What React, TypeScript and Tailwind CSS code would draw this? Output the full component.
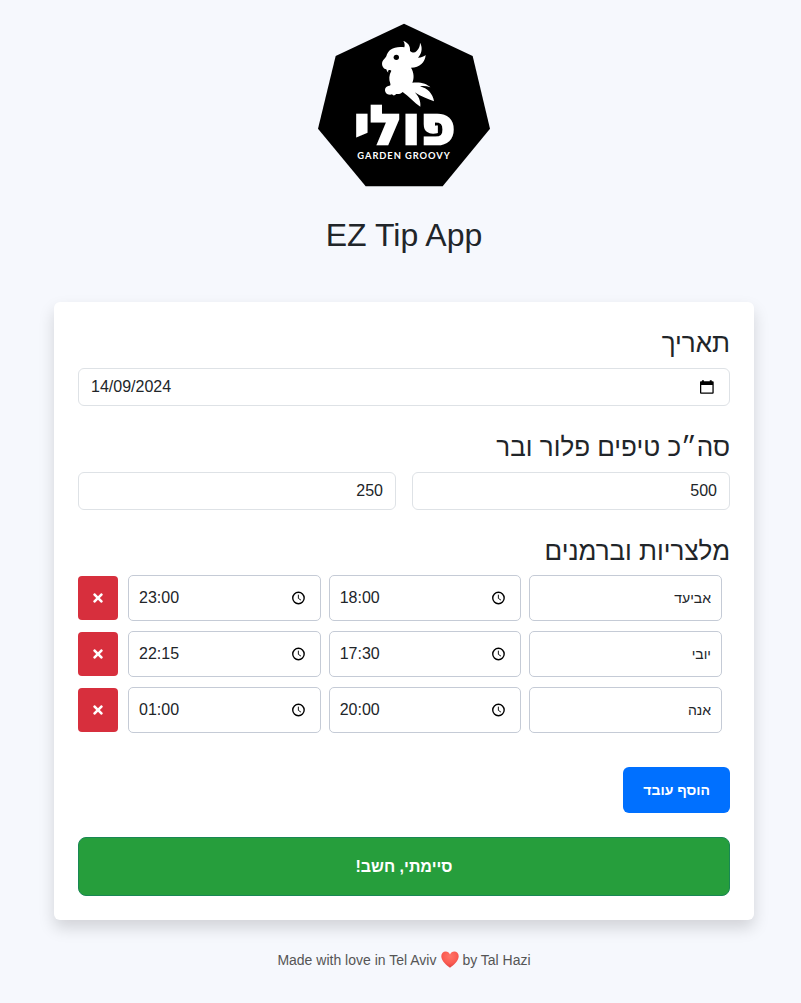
import { useState } from 'react';
import type { ReactNode } from 'react';
import { FaTimes } from 'react-icons/fa';

type Worker = { id: number; name: string; start: string; end: string };

const initialWorkers: Worker[] = [
  { id: 1, name: 'אביעד', start: '18:00', end: '23:00' },
  { id: 2, name: 'יובי', start: '17:30', end: '22:15' },
  { id: 3, name: 'אנה', start: '20:00', end: '01:00' },
];

function Logo() {
  return (
    <svg
      viewBox="24 24 516 492"
      className="h-[164px] w-[172px]"
      role="img"
      aria-label="פולי Garden Groovy"
    >
      <polygon points="282,26 488,123 540,341 398,514 167,514 24,341 77,123" fill="#000" />
      <path
        fill="#fff"
        d="M235 173 C231 170 230 166 229 163 C219 161 214 150 217 140 C220 134 225 130 229 124 C234 104 252 93 283 97 C285 90 284 84 280 78 C293 82 302 93 300 108 C308 114 314 114 320 108 C328 100 330 92 330 83 C337 94 338 112 324 128 C335 128 342 124 347 120 C345 142 330 158 303 158 C312 172 313 190 307 203 C330 200 352 206 361 217 C350 213 340 212 330 214 C352 220 369 236 372 259 C354 253 334 245 314 232 C324 242 333 256 331 275 C314 264 296 243 278 231 C271 237 266 238 258 237 C254 243 249 242 246 238 C238 241 228 237 226 230 C223 221 228 213 238 212 C241 211 242 210 241 206 C236 192 237 180 244 167 C241 165 238 165 236 165 C234 168 234 170 235 173 Z"
      />
      <circle cx="259" cy="127" r="8" fill="#000" />
      <text
        x="284"
        y="386"
        textAnchor="middle"
        fill="#fff"
        stroke="#fff"
        strokeWidth="8"
        className="font-['DejaVu_Sans',sans-serif] text-[160px] font-bold"
      >
        פולי
      </text>
      <text
        x="282"
        y="432"
        textAnchor="middle"
        fill="#fff"
        className="font-['Lato',sans-serif] text-[28px] font-bold tracking-widest"
      >
        GARDEN GROOVY
      </text>
    </svg>
  );
}

function CalendarIcon() {
  return (
    <svg viewBox="0 0 14 14" className="size-3.5" aria-hidden="true">
      <path
        fill="#000"
        fillRule="evenodd"
        d="M2 0h2v1h6V0h2v1h1a1 1 0 0 1 1 1v11a1 1 0 0 1-1 1H1a1 1 0 0 1-1-1V2a1 1 0 0 1 1-1h1zM1.300 5v7.700h11.400V5z"
      />
    </svg>
  );
}

function ClockIcon() {
  return (
    <svg viewBox="0 0 14 14" className="size-3.5" fill="none" stroke="#000" aria-hidden="true">
      <circle cx="7" cy="7" r="6.200" strokeWidth="1.500" />
      <path d="M6.900 3.400V7.400L9.700 9.300" strokeWidth="1" />
    </svg>
  );
}

function Heart() {
  return (
    <svg
      viewBox="0 0 18 17"
      className="mr-[3px] ml-[5px] inline h-[17px] w-[18px] align-text-bottom"
      role="img"
      aria-label="love"
    >
      <defs>
        <radialGradient id="heart" cx="0.5" cy="0.3" r="0.7">
          <stop offset="0" stopColor="#ff7468" />
          <stop offset="0.6" stopColor="#fb5c52" />
          <stop offset="1" stopColor="#dd3f40" />
        </radialGradient>
      </defs>
      <path
        fill="url(#heart)"
        d="M9 16.800C6 14.500.3 10.200.3 5.300.3 2.500 2.300.5 4.700.5 6.700.5 8.200 1.600 9 3.400 9.800 1.600 11.300.5 13.300.5c2.400 0 4.400 2 4.400 4.800 0 4.900-5.700 9.200-8.700 11.500z"
      />
    </svg>
  );
}

function SectionHeading({ children }: { children: ReactNode }) {
  return <h2 className="text-[26px] leading-[34px] font-medium">{children}</h2>;
}

function TimeField({
  label,
  value,
  onChange,
}: {
  label: string;
  value: string;
  onChange: (value: string) => void;
}) {
  return (
    <div
      dir="ltr"
      className="flex h-[46px] min-w-0 items-center rounded-[5px] border border-[#c5cbd6] bg-white pr-[15px] pl-2.5"
    >
      <input
        type="text"
        aria-label={label}
        value={value}
        onChange={(e) => onChange(e.target.value)}
        className="w-full min-w-0 text-base outline-none"
      />
      <ClockIcon />
    </div>
  );
}

export default function App() {
  const [workers, setWorkers] = useState(initialWorkers);

  const update = (id: number, patch: Partial<Worker>) =>
    setWorkers((list) => list.map((w) => (w.id === id ? { ...w, ...patch } : w)));

  const add = () =>
    setWorkers((list) => [...list, { id: Date.now(), name: '', start: '', end: '' }]);

  return (
    <div
      dir="rtl"
      className="min-h-screen bg-[#f6f8fd] pt-[23px] pr-5 pb-[34px] pl-[27px] font-['Liberation_Sans',sans-serif] text-[#212529]"
    >
      <main className="mx-auto max-w-[700px]">
        <header className="flex flex-col items-center gap-7">
          <Logo />
          <h1 className="text-[32px] leading-10 font-medium">EZ Tip App</h1>
        </header>

        <form
          onSubmit={(e) => e.preventDefault()}
          className="mt-[47px] flex flex-col gap-6 rounded-md bg-white p-6 shadow-[0_8px_16px_rgba(0,0,0,0.15)]"
        >
          <section className="flex flex-col gap-2">
            <SectionHeading>
              <label htmlFor="date">תאריך</label>
            </SectionHeading>
            <div
              dir="ltr"
              className="flex h-[38px] items-center rounded-md border border-[#dee2e6] pr-[15px] pl-3"
            >
              <input
                id="date"
                type="text"
                defaultValue="14/09/2024"
                className="w-full min-w-0 text-base outline-none"
              />
              <CalendarIcon />
            </div>
          </section>

          <section className="flex flex-col gap-2">
            <SectionHeading>סה״כ טיפים פלור ובר</SectionHeading>
            <div className="flex gap-4">
              <input
                type="text"
                inputMode="numeric"
                aria-label="פלור"
                defaultValue="500"
                className="h-[38px] min-w-0 flex-1 rounded-md border border-[#dee2e6] px-3 text-base"
              />
              <input
                type="text"
                inputMode="numeric"
                aria-label="בר"
                defaultValue="250"
                className="h-[38px] min-w-0 flex-1 rounded-md border border-[#dee2e6] px-3 text-base"
              />
            </div>
          </section>

          <section>
            <SectionHeading>מלצריות וברמנים</SectionHeading>
            <ul className="mt-[7px] flex flex-col gap-2.5">
              {workers.map((w) => (
                <li key={w.id} className="flex items-center gap-2.5 ps-2">
                  <div className="grid min-w-0 flex-1 grid-cols-3 gap-2">
                    <input
                      type="text"
                      aria-label="שם"
                      value={w.name}
                      onChange={(e) => update(w.id, { name: e.target.value })}
                      className="h-[46px] min-w-0 rounded-[5px] border border-[#c5cbd6] px-2.5 text-sm"
                    />
                    <TimeField
                      label="התחלה"
                      value={w.start}
                      onChange={(start) => update(w.id, { start })}
                    />
                    <TimeField
                      label="סיום"
                      value={w.end}
                      onChange={(end) => update(w.id, { end })}
                    />
                  </div>
                  <button
                    type="button"
                    aria-label="הסר"
                    onClick={() => setWorkers((list) => list.filter((x) => x.id !== w.id))}
                    className="flex h-11 w-10 items-center justify-center rounded bg-[#d72f3d] text-white"
                  >
                    <FaTimes className="size-3.5" />
                  </button>
                </li>
              ))}
            </ul>
            <button
              type="button"
              onClick={add}
              className="mt-[34px] block h-[46px] rounded-md bg-[#0070ff] px-5 text-sm font-bold text-white"
            >
              הוסף עובד
            </button>
          </section>

          <button
            type="submit"
            className="h-[59px] rounded-lg border border-[#198754] bg-[#269e3c] text-base font-bold text-white"
          >
            סיימתי, חשב!
          </button>
        </form>

        <footer dir="ltr" className="mt-[30px] text-center text-sm leading-5 text-[#555]">
          Made with love in Tel Aviv
          <Heart />
          by Tal Hazi
        </footer>
      </main>
    </div>
  );
}
